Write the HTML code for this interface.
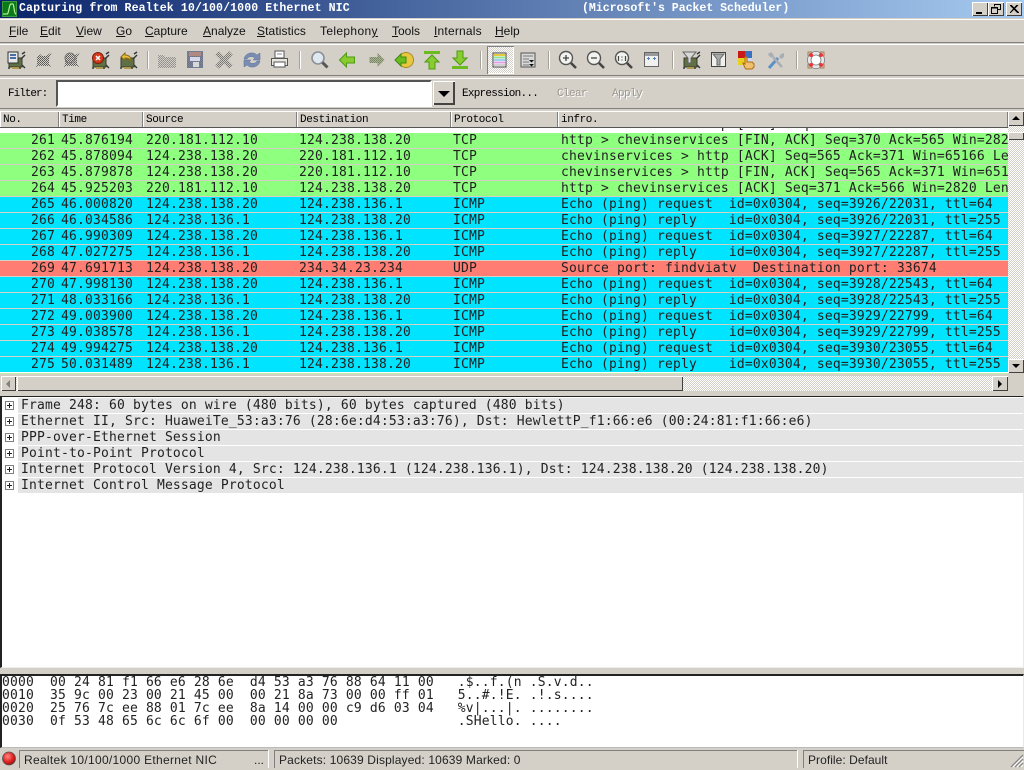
<!DOCTYPE html>
<html><head><meta charset="utf-8"><style>
html,body{margin:0;padding:0;background:#d4d0c8}
body{width:1024px;height:768px;position:relative;overflow:hidden;font-family:"Liberation Sans",sans-serif;color:#000}
.a{position:absolute}
.t{position:absolute;white-space:pre}
#title{left:0;top:0;width:1024px;height:18px;background:linear-gradient(90deg,#0a246a,#a6caf0)}
.tt{font:bold 11.6px/18px "Liberation Mono",monospace;color:#fff;top:0}
.wb{position:absolute;top:2px;width:16px;height:14px;background:#d4d0c8;box-shadow:inset 1px 1px 0 #fff,inset -1px -1px 0 #404040}
.bar{position:absolute;left:0;width:1024px;box-sizing:border-box;border-top:1px solid #fff;border-bottom:1px solid #808080;background:#d4d0c8}
.m{position:absolute;top:24px;font:12px/15px "Liberation Sans",sans-serif;color:#111;white-space:pre}
.m u{text-underline-offset:1px}
svg.i{position:absolute;top:50px;width:20px;height:20px;overflow:visible}
.sep{position:absolute;top:51px;width:1px;height:18px;background:#a5a29b;box-shadow:1px 0 0 #fff}
.s{font:11px/14px "Liberation Mono",monospace;letter-spacing:-.6px;white-space:pre;position:absolute}
.h{position:absolute;top:111px;height:17px;box-sizing:border-box;background:#d4d0c8;box-shadow:inset 1px 1px 0 #fff,inset -1px -1px 0 #808080;font:11px/19px "Liberation Mono",monospace;letter-spacing:-.4px;padding-left:3px;white-space:pre}
.r{position:absolute;left:0;width:1008px;height:15px;overflow:hidden;font:13px/15px "DejaVu Sans Mono",monospace;letter-spacing:.17px;color:#222}
.r span{position:absolute;top:0;white-space:pre}
.r .n{left:0;width:55px;text-align:right}.r .c1{left:61px}.r .c2{left:146px}.r .c3{left:299px}.r .c4{left:453px}.r .c5{left:561px}
.g{background:#8fff7f}.b{background:#00e4ff}.d{background:#ff7d72}
.btn{position:absolute;background:#d4d0c8;box-shadow:inset 1px 1px 0 #fff,inset -1px -1px 0 #404040}
.dit{position:absolute;background:repeating-conic-gradient(#d4d0c8 0 25%,#fff 0 50%) 0 0/2px 2px}
.dr{position:absolute;left:18px;width:1006px;height:15px;background:#e4e4e4;font:13px/15px "DejaVu Sans Mono",monospace;letter-spacing:.17px;padding-left:3px;box-sizing:border-box;white-space:pre;color:#222}
.ex{position:absolute;left:5px;width:7px;height:7px;border:1px solid #808080;background:linear-gradient(#222,#222) center/5px 1px no-repeat,linear-gradient(#222,#222) center/1px 5px no-repeat,#fff}
.x{position:absolute;left:2px;font:13px/13px "DejaVu Sans Mono",monospace;letter-spacing:.17px;white-space:pre;color:#222}
.st{position:absolute;top:750px;height:18px;font:12px/19px "Liberation Sans",sans-serif;white-space:pre;color:#222;border-left:1px solid #808080;border-top:1px solid #808080;box-sizing:border-box;padding-left:4px}
</style></head><body>
<svg width="0" height="0" style="position:absolute"><defs>
<pattern id="dt" width="2" height="2" patternUnits="userSpaceOnUse"><rect width="1" height="1" fill="#555"/><rect x="1" y="1" width="1" height="1" fill="#666"/></pattern>
<symbol id="nic" viewBox="0 0 20 20"><path d="M3 8h13v9H3z" fill="#5f7044" stroke="#3b3b30"/><path d="M16 4l3-2M15 9l4-4M16 15l3 3M3 17v2M14 17v2" stroke="#333" stroke-width="1.4" fill="none"/><path d="M6 17h7v2H6z" fill="#b09a50"/></symbol>
<symbol id="nicg" viewBox="0 0 20 20"><path d="M3 7l3-3 2 2h4l3-2 3-2-3 6v6l3 3-3-1H4l-2 2 1-4z" fill="url(#dt)"/></symbol>
</defs></svg>

<div class="a" id="title"></div>
<svg class="a" style="left:2px;top:1px" width="15" height="16"><rect x=".5" y=".5" width="14" height="15" fill="#0a7a1a" stroke="#3c9c3c"/><path d="M1 13h4c2 0 2-10 4-10h2c1 0 1 10 3 10" fill="none" stroke="#b8f090" stroke-width="1.2"/></svg>
<div class="t tt" style="left:19px;letter-spacing:.08px">Capturing from Realtek 10/100/1000 Ethernet NIC</div>
<div class="t tt" style="left:582px;letter-spacing:-.05px">(Microsoft's Packet Scheduler)</div>
<div class="wb" style="left:972px"><div class="a" style="left:4px;top:10px;width:6px;height:2px;background:#000"></div></div>
<div class="wb" style="left:988px"><svg class="a" style="left:3px;top:2px" width="10" height="10"><path d="M3.500 2.500V.5h6v5H7M.5 3.500h6v6h-6zM.5 4h6" fill="none" stroke="#000"/></svg></div>
<div class="wb" style="left:1006px"><svg class="a" style="left:4px;top:3px" width="9" height="8"><path d="M0 0l8 8M8 0L0 8M1 0l8 8M7 0l-7 8" stroke="#000" fill="none" stroke-width="1"/></svg></div>

<div class="bar" style="top:19px;height:24px"></div>
<div class="m" style="left:9px"><u>F</u>ile</div>
<div class="m" style="left:40px"><u>E</u>dit</div>
<div class="m" style="left:76px"><u>V</u>iew</div>
<div class="m" style="left:116px"><u>G</u>o</div>
<div class="m" style="left:145px"><u>C</u>apture</div>
<div class="m" style="left:203px"><u>A</u>nalyze</div>
<div class="m" style="left:257px;letter-spacing:.1px"><u>S</u>tatistics</div>
<div class="m" style="left:320px;letter-spacing:.35px">Telephon<u>y</u></div>
<div class="m" style="left:392px"><u>T</u>ools</div>
<div class="m" style="left:434px;letter-spacing:.2px"><u>I</u>nternals</div>
<div class="m" style="left:495px"><u>H</u>elp</div>

<div class="bar" style="top:44px;height:32px"></div>
<svg class="i" style="left:6px"><use href="#nic" width="20" height="20"/><rect x="2" y="2" width="10" height="11" fill="#e8e8e8" stroke="#333"/><path d="M4 5h6M4 8h6" stroke="#4a6fa5" stroke-width="2"/></svg>
<svg class="i" style="left:34px"><use href="#nicg" width="20" height="20"/></svg>
<svg class="i" style="left:62px"><use href="#nicg" width="20" height="20"/><circle cx="8" cy="8" r="5" fill="url(#dt)" stroke="#777"/></svg>
<svg class="i" style="left:90px"><use href="#nic" width="20" height="20"/><circle cx="8" cy="8" r="5.500" fill="#d63a1a" stroke="#7a2010"/><path d="M6 6l4 4M10 6l-4 4" stroke="#fff" stroke-width="1.500"/></svg>
<svg class="i" style="left:118px"><use href="#nic" width="20" height="20"/><path d="M3 7l4-4v2c4 0 6 2 6 6-1-2-3-3-6-3v2z" fill="#e8c040" stroke="#8a6a10"/></svg>
<div class="sep" style="left:147px"></div>
<svg class="i" style="left:157px"><path d="M1 5h6l1 2h11v11H1z" fill="url(#dt)" opacity=".55"/></svg>
<svg class="i" style="left:186px"><rect x="1" y="1" width="16" height="17" fill="#5a6a90" opacity=".75"/><rect x="1" y="1" width="16" height="17" fill="url(#dt)" opacity=".4"/><rect x="3" y="2" width="12" height="4" fill="#b08a80"/><rect x="4" y="7" width="10" height="4" fill="#d8d8e8"/><rect x="7" y="12" width="6" height="5" fill="#d8d8d8"/></svg>
<svg class="i" style="left:214px"><path d="M3 3l14 14M17 3L3 17" stroke="url(#dt)" stroke-width="5" fill="none" opacity=".8"/></svg>
<svg class="i" style="left:242px"><path d="M2 9c1-6 9-8 13-4l3-2v7h-7l2-2c-3-2-6-2-8 1zM18 11c-1 6-9 8-13 4l-3 2v-7h7l-2 2c3 2 6 2 8-1z" fill="#7a8cb0" stroke="#5a72a0" stroke-width=".5"/></svg>
<svg class="i" style="left:270px"><path d="M5 1h9v7H5z" fill="#fff" stroke="#555"/><path d="M1.500 8.500h16v7h-16z" fill="#e8e8e0" stroke="#555"/><path d="M4 12h11v5H4z" fill="#fff" stroke="#555"/><path d="M7 4h5" stroke="#888"/></svg>
<div class="sep" style="left:299px"></div>
<svg class="i" style="left:310px"><circle cx="8" cy="8" r="6" fill="#dfe8ee" stroke="#8a9096" stroke-width="1.600"/><path d="M12.500 12.500l5 5" stroke="#555" stroke-width="3"/></svg>
<svg class="i" style="left:338px"><path d="M1.500 10l7-7v4h8v6h-8v4z" fill="#88cc30" stroke="#4e9a10"/></svg>
<svg class="i" style="left:366px"><path d="M18.500 10l-7-7v4h-8v6h8v4z" fill="url(#dt)" opacity=".65"/><path d="M18.500 10l-7-7v4h-8v6h8v4z" fill="#6a8a40" opacity=".4"/></svg>
<svg class="i" style="left:394px"><circle cx="12" cy="10" r="7.500" fill="#e8c840" stroke="#a88a20"/><path d="M1 10l6-6v3h5v6H7v3z" fill="#6cbc20" stroke="#3e8a10"/></svg>
<svg class="i" style="left:422px"><path d="M2 2.500h16" stroke="#6cbc20" stroke-width="3"/><path d="M10 5l7 7h-4v7H7v-7H3z" fill="#88cc30" stroke="#4e9a10"/></svg>
<svg class="i" style="left:450px"><path d="M2 17.500h16" stroke="#6cbc20" stroke-width="3"/><path d="M10 15l7-7h-4V1H7v7H3z" fill="#88cc30" stroke="#4e9a10"/></svg>
<div class="sep" style="left:480px"></div>
<div class="dit" style="left:487px;top:46px;width:27px;height:28px;box-shadow:inset 1px 1px 0 #808080,inset -1px -1px 0 #fff"></div>
<svg class="i" style="left:490px"><rect x="3" y="3" width="13" height="14" fill="#fff" stroke="#444"/><path d="M4 5h11" stroke="#e8c840" stroke-width="2"/><path d="M4 7.500h11" stroke="#90e090" stroke-width="2"/><path d="M4 10h11" stroke="#a0d0f0" stroke-width="2"/><path d="M4 12.500h11" stroke="#e0a0e0" stroke-width="2"/><path d="M4 15h11" stroke="#d0d0d0" stroke-width="2"/></svg>
<svg class="i" style="left:518px"><rect x="3" y="3" width="14" height="14" fill="#d8d8d8" stroke="#555"/><path d="M5 6h10M5 9h6M5 12h6M5 15h6" stroke="#777"/><path d="M11 10h5l-2.500 2.500zM11 14h5l-2.500 2.500z" fill="#111"/></svg>
<div class="sep" style="left:548px"></div>
<svg class="i" style="left:558px"><circle cx="8" cy="8" r="6.500" fill="#f2f2ee" stroke="#555" stroke-width="1.400"/><path d="M13 13l5 5" stroke="#444" stroke-width="2.500"/><path d="M5 8h6M8 5v6" stroke="#444" stroke-width="1.300"/></svg>
<svg class="i" style="left:586px"><circle cx="8" cy="8" r="6.500" fill="#f2f2ee" stroke="#555" stroke-width="1.400"/><path d="M13 13l5 5" stroke="#444" stroke-width="2.500"/><path d="M5 8h6" stroke="#444" stroke-width="1.300"/></svg>
<svg class="i" style="left:614px"><circle cx="8" cy="8" r="6.500" fill="#f2f2ee" stroke="#555" stroke-width="1.400"/><path d="M13 13l5 5" stroke="#444" stroke-width="2.500"/><path d="M4.500 6v5M8 6.500v1M8 9.500v1M11.500 6v5" stroke="#444" stroke-width="1.200"/></svg>
<svg class="i" style="left:642px"><rect x="2.500" y="2.500" width="14" height="14" fill="#f0f0ee" stroke="#666"/><path d="M3 4.500h13" stroke="#999" stroke-width="3"/><path d="M5 8.500h3M6.500 7v3M11 8.500h3M12.500 7v3" stroke="#5a80b0"/></svg>
<div class="sep" style="left:672px"></div>
<svg class="i" style="left:681px"><use href="#nic" width="20" height="20"/><path d="M2 2h13l-5 6v5H7V8z" fill="#d8d8d8" stroke="#666"/></svg>
<svg class="i" style="left:709px"><rect x="2.500" y="2.500" width="14" height="14" fill="#f0f0ee" stroke="#444"/><path d="M4 4h11l-4 5v6H8V9z" fill="#aaa" stroke="#666"/></svg>
<svg class="i" style="left:737px"><rect x="1" y="1" width="7" height="7" fill="#c81818"/><rect x="8" y="1" width="7" height="7" fill="#3a70c0"/><rect x="1" y="8" width="7" height="7" fill="#e8d020"/><rect x="8" y="8" width="7" height="7" fill="#d0d8e8"/><path d="M8 18l-2-5 2 1V7h2v5h5l2 2v3l-2 2H9z" fill="#f0c070" stroke="#b06a10"/></svg>
<svg class="i" style="left:766px"><path d="M3 18L12 8" stroke="#5a90c8" stroke-width="3"/><path d="M16 17L7 7" stroke="#a8aeb4" stroke-width="2.500"/><path d="M2 4c1 3 3 4 5 3l1-2-3-3zM18 3l-3 1-2 3 2 2 3-2z" fill="#a8aeb4"/></svg>
<div class="sep" style="left:796px"></div>
<svg class="i" style="left:806px"><rect x="2" y="2" width="16" height="16" fill="#d4d0c8" stroke="#a08050"/><circle cx="10" cy="10" r="7" fill="none" stroke="#e8e8e8" stroke-width="4"/><circle cx="10" cy="10" r="8.500" fill="none" stroke="#777" stroke-width=".8"/><circle cx="10" cy="10" r="5" fill="#fff" stroke="#777" stroke-width=".8"/><circle cx="5" cy="5" r="2" fill="#e83838"/><circle cx="15" cy="5" r="2" fill="#e83838"/><circle cx="5" cy="15" r="2" fill="#e83838"/><circle cx="15" cy="15" r="2" fill="#e83838"/></svg>

<div class="bar" style="top:78px;height:31px"></div>
<div class="s" style="left:8px;top:87px;letter-spacing:-1px">Filter:</div>
<div class="a" style="left:56px;top:80px;width:376px;height:27px;box-sizing:border-box;background:#fff;border:2px solid;border-color:#555 #fff #fff #555"></div>
<div class="btn" style="left:433px;top:81px;width:22px;height:24px;box-shadow:inset 1px 1px 0 #fff,inset -2px -2px 0 #444"></div>
<div class="a" style="left:438px;top:91px;border-left:6px solid transparent;border-right:6px solid transparent;border-top:6px solid #000"></div>
<div class="s" style="left:462px;top:87px;letter-spacing:-.75px">Expression...</div>
<div class="s" style="left:557px;top:87px;color:#9a9890;text-shadow:1px 1px 0 #fff">Clear</div>
<div class="s" style="left:612px;top:87px;color:#9a9890;text-shadow:1px 1px 0 #fff">Apply</div>

<div class="a" style="left:0;top:128px;width:1008px;height:5px;background:#fff;overflow:hidden"><div class="r" style="top:-11px;background:none"><span class="n">260</span><span class="c1">45.875312</span><span class="c2">124.238.138.20</span><span class="c3">220.181.112.10</span><span class="c4">TCP</span><span class="c5">chevinservices &gt; http [ACK] Seq=565 Ack=370 Win=65167 Len=0 (ping) py</span></div></div>
<div class="h" style="left:0;width:59px">No.</div>
<div class="h" style="left:59px;width:84px">Time</div>
<div class="h" style="left:143px;width:154px">Source</div>
<div class="h" style="left:297px;width:154px">Destination</div>
<div class="h" style="left:451px;width:107px">Protocol</div>
<div class="h" style="left:558px;width:450px">infro.</div>
<div class="a" style="left:0;top:127px;width:1008px;height:1px;background:#555"></div>

<div class="r g" style="top:133px"><span class="n">261</span><span class="c1">45.876194</span><span class="c2">220.181.112.10</span><span class="c3">124.238.138.20</span><span class="c4">TCP</span><span class="c5">http &gt; chevinservices [FIN, ACK] Seq=370 Ack=565 Win=2820 Len=0</span></div>
<div class="r g" style="top:149px"><span class="n">262</span><span class="c1">45.878094</span><span class="c2">124.238.138.20</span><span class="c3">220.181.112.10</span><span class="c4">TCP</span><span class="c5">chevinservices &gt; http [ACK] Seq=565 Ack=371 Win=65166 Len=0</span></div>
<div class="r g" style="top:165px"><span class="n">263</span><span class="c1">45.879878</span><span class="c2">124.238.138.20</span><span class="c3">220.181.112.10</span><span class="c4">TCP</span><span class="c5">chevinservices &gt; http [FIN, ACK] Seq=565 Ack=371 Win=65166 Len=0</span></div>
<div class="r g" style="top:181px"><span class="n">264</span><span class="c1">45.925203</span><span class="c2">220.181.112.10</span><span class="c3">124.238.138.20</span><span class="c4">TCP</span><span class="c5">http &gt; chevinservices [ACK] Seq=371 Ack=566 Win=2820 Len=0</span></div>
<div class="r b" style="top:197px"><span class="n">265</span><span class="c1">46.000820</span><span class="c2">124.238.138.20</span><span class="c3">124.238.136.1</span><span class="c4">ICMP</span><span class="c5">Echo (ping) request  id=0x0304, seq=3926/22031, ttl=64</span></div>
<div class="r b" style="top:213px"><span class="n">266</span><span class="c1">46.034586</span><span class="c2">124.238.136.1</span><span class="c3">124.238.138.20</span><span class="c4">ICMP</span><span class="c5">Echo (ping) reply    id=0x0304, seq=3926/22031, ttl=255</span></div>
<div class="r b" style="top:229px"><span class="n">267</span><span class="c1">46.990309</span><span class="c2">124.238.138.20</span><span class="c3">124.238.136.1</span><span class="c4">ICMP</span><span class="c5">Echo (ping) request  id=0x0304, seq=3927/22287, ttl=64</span></div>
<div class="r b" style="top:245px"><span class="n">268</span><span class="c1">47.027275</span><span class="c2">124.238.136.1</span><span class="c3">124.238.138.20</span><span class="c4">ICMP</span><span class="c5">Echo (ping) reply    id=0x0304, seq=3927/22287, ttl=255</span></div>
<div class="r d" style="top:261px"><span class="n">269</span><span class="c1">47.691713</span><span class="c2">124.238.138.20</span><span class="c3">234.34.23.234</span><span class="c4">UDP</span><span class="c5">Source port: findviatv  Destination port: 33674</span></div>
<div class="r b" style="top:277px"><span class="n">270</span><span class="c1">47.998130</span><span class="c2">124.238.138.20</span><span class="c3">124.238.136.1</span><span class="c4">ICMP</span><span class="c5">Echo (ping) request  id=0x0304, seq=3928/22543, ttl=64</span></div>
<div class="r b" style="top:293px"><span class="n">271</span><span class="c1">48.033166</span><span class="c2">124.238.136.1</span><span class="c3">124.238.138.20</span><span class="c4">ICMP</span><span class="c5">Echo (ping) reply    id=0x0304, seq=3928/22543, ttl=255</span></div>
<div class="r b" style="top:309px"><span class="n">272</span><span class="c1">49.003900</span><span class="c2">124.238.138.20</span><span class="c3">124.238.136.1</span><span class="c4">ICMP</span><span class="c5">Echo (ping) request  id=0x0304, seq=3929/22799, ttl=64</span></div>
<div class="r b" style="top:325px"><span class="n">273</span><span class="c1">49.038578</span><span class="c2">124.238.136.1</span><span class="c3">124.238.138.20</span><span class="c4">ICMP</span><span class="c5">Echo (ping) reply    id=0x0304, seq=3929/22799, ttl=255</span></div>
<div class="r b" style="top:341px"><span class="n">274</span><span class="c1">49.994275</span><span class="c2">124.238.138.20</span><span class="c3">124.238.136.1</span><span class="c4">ICMP</span><span class="c5">Echo (ping) request  id=0x0304, seq=3930/23055, ttl=64</span></div>
<div class="r b" style="top:357px"><span class="n">275</span><span class="c1">50.031489</span><span class="c2">124.238.136.1</span><span class="c3">124.238.138.20</span><span class="c4">ICMP</span><span class="c5">Echo (ping) reply    id=0x0304, seq=3930/23055, ttl=255</span></div>
<div class="a" style="left:0;top:132px;width:1008px;height:1px;background:#fff"></div>
<div class="a" style="left:0;top:372px;width:1008px;height:1px;background:#fff"></div>
<div class="a" style="left:0;top:373px;width:1008px;height:1px;background:#bfeeb0"></div>

<div class="dit" style="left:1008px;top:126px;width:16px;height:234px"></div>
<div class="btn" style="left:1008px;top:111px;width:16px;height:15px"></div>
<div class="a" style="left:1012px;top:116px;border-left:4px solid transparent;border-right:4px solid transparent;border-bottom:4px solid #000"></div>
<div class="btn" style="left:1008px;top:132px;width:16px;height:8px"></div>
<div class="btn" style="left:1008px;top:359px;width:16px;height:14px"></div>
<div class="a" style="left:1012px;top:364px;border-left:4px solid transparent;border-right:4px solid transparent;border-top:4px solid #000"></div>

<div class="dit" style="left:16px;top:376px;width:976px;height:15px"></div>
<div class="btn" style="left:1px;top:376px;width:15px;height:15px"></div>
<div class="a" style="left:6px;top:380px;border-top:4px solid transparent;border-bottom:4px solid transparent;border-right:4px solid #808080"></div>
<div class="btn" style="left:17px;top:376px;width:666px;height:15px"></div>
<div class="btn" style="left:992px;top:376px;width:16px;height:15px"></div>
<div class="a" style="left:998px;top:380px;border-top:4px solid transparent;border-bottom:4px solid transparent;border-left:4px solid #000"></div>

<div class="a" style="left:0;top:396px;width:1024px;height:272px;box-sizing:border-box;background:#fff;border-top:1px solid #222;border-left:2px solid #222;border-right:1px solid #e8e8e8;border-bottom:1px solid #eee"></div>
<div class="dr" style="top:398px">Frame 248: 60 bytes on wire (480 bits), 60 bytes captured (480 bits)</div><div class="ex" style="top:401px"></div>
<div class="dr" style="top:414px">Ethernet II, Src: HuaweiTe_53:a3:76 (28:6e:d4:53:a3:76), Dst: HewlettP_f1:66:e6 (00:24:81:f1:66:e6)</div><div class="ex" style="top:417px"></div>
<div class="dr" style="top:430px">PPP-over-Ethernet Session</div><div class="ex" style="top:433px"></div>
<div class="dr" style="top:446px">Point-to-Point Protocol</div><div class="ex" style="top:449px"></div>
<div class="dr" style="top:462px">Internet Protocol Version 4, Src: 124.238.136.1 (124.238.136.1), Dst: 124.238.138.20 (124.238.138.20)</div><div class="ex" style="top:465px"></div>
<div class="dr" style="top:478px">Internet Control Message Protocol</div><div class="ex" style="top:481px"></div>

<div class="a" style="left:0;top:674px;width:1024px;height:74px;box-sizing:border-box;background:#fff;border-top:2px solid #222;border-left:2px solid #222;border-right:1px solid #e8e8e8;border-bottom:1px solid #bbb"></div>
<div class="x" style="top:676px">0000  00 24 81 f1 66 e6 28 6e  d4 53 a3 76 88 64 11 00   .$..f.(n .S.v.d..</div>
<div class="x" style="top:689px">0010  35 9c 00 23 00 21 45 00  00 21 8a 73 00 00 ff 01   5..#.!E. .!.s....</div>
<div class="x" style="top:702px">0020  25 76 7c ee 88 01 7c ee  8a 14 00 00 c9 d6 03 04   %v|...|. ........</div>
<div class="x" style="top:715px">0030  0f 53 48 65 6c 6c 6f 00  00 00 00 00               .SHello. ....</div>

<svg class="a" style="left:2px;top:751px" width="15" height="15"><defs><radialGradient id="led" cx=".4" cy=".35" r=".7"><stop offset="0" stop-color="#ff8a80"/><stop offset=".6" stop-color="#e02020"/><stop offset="1" stop-color="#901010"/></radialGradient></defs><circle cx="7" cy="7.500" r="6.500" fill="url(#led)" stroke="#555" stroke-width=".8"/></svg>
<div class="st" style="left:19px;width:250px;letter-spacing:.3px">Realtek 10/100/1000 Ethernet NIC</div>
<div class="t" style="left:254px;top:751px;font:12px/19px 'Liberation Sans',sans-serif;color:#222">...</div>
<div class="a" style="left:268px;top:750px;width:1px;height:18px;background:#fff"></div>
<div class="st" style="left:274px;width:524px;letter-spacing:.15px">Packets: 10639 Displayed: 10639 Marked: 0</div>
<div class="a" style="left:797px;top:750px;width:1px;height:18px;background:#fff"></div>
<div class="st" style="left:803px;width:221px;letter-spacing:.05px">Profile: Default</div>
<svg class="a" style="left:1010px;top:754px" width="14" height="14"><path d="M13 1L1 13M13 5L5 13M13 9L9 13" stroke="#808080" stroke-width="1.200"/><path d="M13 3L3 13M13 7L7 13M13 11L11 13" stroke="#fff"/></svg>
</body></html>
